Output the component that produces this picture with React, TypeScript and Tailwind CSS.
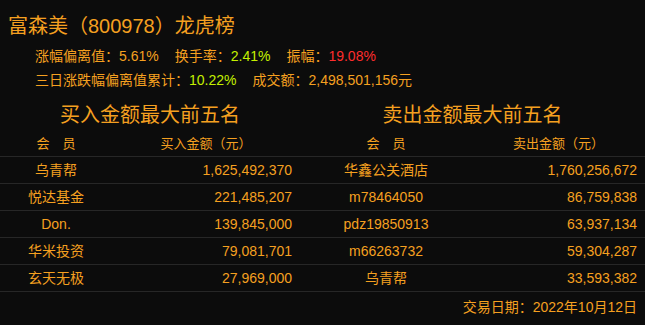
const buys = [
  { name: '乌青帮', amount: '1,625,492,370' },
  { name: '悦达基金', amount: '221,485,207' },
  { name: 'Don.', amount: '139,845,000' },
  { name: '华米投资', amount: '79,081,701' },
  { name: '玄天无极', amount: '27,969,000' },
]

const sells = [
  { name: '华鑫公关酒店', amount: '1,760,256,672' },
  { name: 'm78464050', amount: '86,759,838' },
  { name: 'pdz19850913', amount: '63,937,134' },
  { name: 'm66263732', amount: '59,304,287' },
  { name: '乌青帮', amount: '33,593,382' },
]

export default function App() {
  return (
    <div className="w-[645px] h-[325px] overflow-hidden bg-[#0c0c0c] text-[#f5a020] font-['Liberation_Sans','Noto_Sans_CJK_SC',sans-serif]">
      {/* title */}
      <div className="pt-[12px] h-[40px] flex items-center pl-[8px] text-[20px] leading-none">
        富森美（800978）龙虎榜
      </div>

      {/* stats */}
      <div className="mt-[4px] h-[24px] flex items-center gap-[16px] pl-[35px] text-[14px]">
        <span>
          涨幅偏离值：<span>5.61%</span>
        </span>
        <span>
          换手率：<span className="text-[#c4f000]">2.41%</span>
        </span>
        <span>
          振幅：<span className="text-[#ff2d2d]">19.08%</span>
        </span>
      </div>
      <div className="h-[24px] flex items-center gap-[16px] pl-[35px] text-[14px]">
        <span>
          三日涨跌幅偏离值累计：<span className="text-[#c4f000]">10.22%</span>
        </span>
        <span>成交额：2,498,501,156元</span>
      </div>

      {/* section headings */}
      <div className="mt-[11px] h-[24px] grid grid-cols-[300px_345px] items-center text-[20px] leading-none">
        <div className="text-center">买入金额最大前五名</div>
        <div className="text-center">卖出金额最大前五名</div>
      </div>

      {/* table */}
      <div className="mt-[4px] grid grid-cols-[112px_188px_172px_173px] text-[13px]">
        <div className="h-[26px] flex items-center justify-center border-b border-[#272727]">会　员</div>
        <div className="h-[26px] flex items-center justify-center border-b border-[#272727]">买入金额（元）</div>
        <div className="h-[26px] flex items-center justify-center border-b border-[#272727]">会　员</div>
        <div className="h-[26px] flex items-center justify-center border-b border-[#272727]">卖出金额（元）</div>

        {buys.map((b, i) => (
          <Row key={i} buy={b} sell={sells[i]} />
        ))}
      </div>

      {/* footer */}
      <div className="h-[30px] flex items-center justify-end pr-[8px] text-[14px]">
        交易日期：2022年10月12日
      </div>
    </div>
  )
}

function Row({
  buy,
  sell,
}: {
  buy: { name: string; amount: string }
  sell: { name: string; amount: string }
}) {
  const cell = 'h-[27px] flex items-center border-b border-[#272727] text-[14px]'
  return (
    <>
      <div className={cell + ' justify-center'}>{buy.name}</div>
      <div className={cell + ' justify-end pr-[8px]'}>{buy.amount}</div>
      <div className={cell + ' justify-center'}>{sell.name}</div>
      <div className={cell + ' justify-end pr-[8px]'}>{sell.amount}</div>
    </>
  )
}
